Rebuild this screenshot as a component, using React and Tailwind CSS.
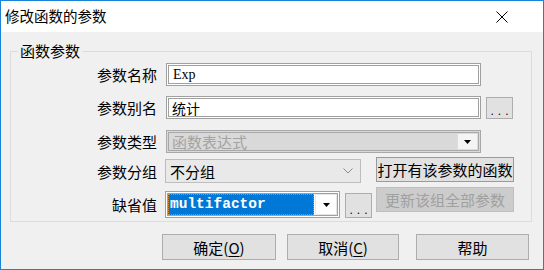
import React from "react";

/* small drawn bits */

function DropTri() {
  return (
    <svg width="7" height="4" viewBox="0 0 7 4">
      <path d="M0 0h7L3.5 4z" fill="#000" />
    </svg>
  );
}

function Chevron() {
  return (
    <svg width="10" height="6" viewBox="0 0 10 6">
      <path d="M0.5 0.5L5 5L9.5 0.5" stroke="#8a8a8a" strokeWidth="1" fill="none" />
    </svg>
  );
}

function Dots({ className = "" }) {
  return (
    <button
      className={`w-[27px] bg-[#e1e1e1] border border-[#adadad] flex items-end justify-center pb-[1px] text-[12px] leading-[12px] tracking-[4px] pl-[4px] text-black font-['Liberation_Sans',sans-serif] ${className}`}
    >
      ...
    </button>
  );
}

function Label({ children, w = "w-[146px]" }) {
  return <div className={`${w} shrink-0 text-right leading-none`}>{children}</div>;
}

/* ======================
   DIALOG
====================== */

export default function App() {
  return (
    <div className="w-[544px] h-[270px] border border-[#1883d7] bg-[#f0f0f0] text-[15px] text-black font-['Noto_Sans_CJK_SC',sans-serif] flex flex-col overflow-hidden">
      {/* title bar */}
      <div className="h-[31px] bg-white flex items-center justify-between pl-[4px] pr-[35px] shrink-0">
        <span className="text-[14.5px] leading-none">修改函数的参数</span>
        <svg width="12" height="12" viewBox="0 0 12 12">
          <path d="M0.5 0.5L11.5 11.5M11.5 0.5L0.5 11.5" stroke="#000" strokeWidth="1" />
        </svg>
      </div>

      <div className="pl-[9px] pr-[11px] pt-[10px]">
        <fieldset className="border border-[#dcdcdc] pb-[3px]">
          <legend className="ml-[7px] px-[2px] leading-[18px]">函数参数</legend>

          {/* 参数名称 */}
          <div className="flex items-center mt-[3px]">
            <Label>参数名称</Label>
            <div className="ml-[9px] w-[315px] h-[23px] bg-white border-[3px] border-double border-[#a0a0a0] flex items-center pl-[4px] text-[14px] font-['Liberation_Serif',serif] leading-none">
              Exp
            </div>
          </div>

          {/* 参数别名 */}
          <div className="flex items-center mt-[10px]">
            <Label>参数别名</Label>
            <div className="ml-[9px] w-[315px] h-[23px] bg-white border-[3px] border-double border-[#a0a0a0] flex items-center pl-[3px] text-[14px] leading-none">
              统计
            </div>
            <Dots className="ml-[5px] h-[22px] mt-[1px]" />
          </div>

          {/* 参数类型 (disabled) */}
          <div className="flex items-center mt-[11px]">
            <Label>参数类型</Label>
            <div className="ml-[9px] w-[315px] h-[23px] bg-[#d9d9d9] border-[3px] border-double border-[#a8a8a8] flex items-center justify-between pl-[3px] leading-none">
              <span className="text-[#a3a3a3]">函数表达式</span>
              <div className="w-[21px] h-full bg-[#f4f4f4] border border-[#dcdcdc] flex items-center justify-center">
                <DropTri />
              </div>
            </div>
          </div>

          {/* 参数分组 / 缺省值 + side buttons */}
          <div className="flex mt-[4px]">
            <div className="flex flex-col">
              <div className="flex items-center mt-[2px]">
                <Label>参数分组</Label>
                <div className="ml-[8px] w-[196px] h-[24px] bg-[#e9e9e9] border border-[#bdbdbd] flex items-center justify-between pl-[4px] pr-[7px] leading-none">
                  <span>不分组</span>
                  <Chevron />
                </div>
              </div>

              <div className="flex items-center mt-[8px]">
                <Label>缺省值</Label>
                <div className="ml-[8px] w-[175px] h-[27px] bg-white border-[3px] border-double border-[#a0a0a0] flex items-stretch">
                  <div className="flex-1 mr-[1px] bg-[#0078d7] border border-dotted border-[#d08a30] flex items-center pl-[1px] text-white font-bold text-[14.5px] font-['Liberation_Mono',monospace] leading-none">
                    multifactor
                  </div>
                  <div className="w-[22px] bg-white border border-[#e6e6e6] flex items-center justify-center">
                    <DropTri />
                  </div>
                </div>
                <Dots className="ml-[5px] h-[25px] mt-[2px]" />
              </div>
            </div>

            <div className="flex flex-col ml-[4px] gap-[5px]">
              <button className="w-[138px] h-[25px] bg-[#e1e1e1] border border-[#9a9a9a] leading-none">
                打开有该参数的函数
              </button>
              <button className="w-[138px] h-[25px] bg-[#cccccc] border border-[#bfbfbf] text-[#a0a0a0] leading-none">
                更新该组全部参数
              </button>
            </div>
          </div>
        </fieldset>

        {/* dialog buttons */}
        <div className="flex mt-[12px] ml-[152px]">
          <button className="w-[114px] h-[26px] bg-[#e1e1e1] border border-[#adadad] leading-none">
            确定(<span className="underline underline-offset-2">O</span>)
          </button>
          <button className="ml-[11px] w-[112px] h-[26px] bg-[#e1e1e1] border border-[#adadad] leading-none">
            取消(<span className="underline underline-offset-2">C</span>)
          </button>
          <button className="ml-[17px] w-[113px] h-[26px] bg-[#e1e1e1] border border-[#adadad] leading-none">
            帮助
          </button>
        </div>
      </div>
    </div>
  );
}
